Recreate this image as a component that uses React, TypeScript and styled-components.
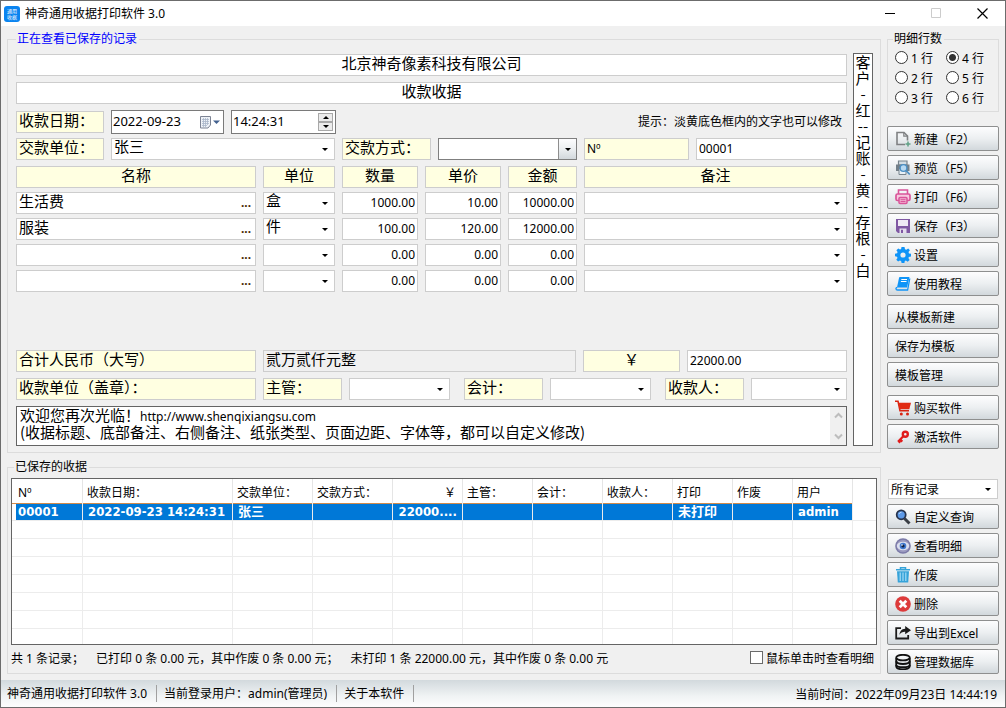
import React, { useState } from "react";
import styled, { createGlobalStyle, css } from "styled-components";

const line = "#cdcdcd";
const dark = "#646464";
const cream = "#ffffe1";
const face = "linear-gradient(#fdfdfe, #eceff1 50%, #d2d8dc)";

const Global = createGlobalStyle`
  *, *::before, *::after { box-sizing: border-box; }
  body { margin: 0; background: #f0f0f0; }
  body, input, select, button, textarea {
    font-family: "Noto Sans", "Noto Sans CJK SC", sans-serif;
    font-size: 12px;
    color: #000;
  }
  button, input, select, textarea { margin: 0; border-radius: 0; outline: none; }
`;

const Window = styled.div`
  min-height: 100vh;
  display: flex;
  flex-direction: column;
  background: #f0f0f0;
  border: 1px solid #6c6c6c;
`;

/* title bar */
const TitleBar = styled.header`
  height: 25px;
  display: flex;
  align-items: center;
  background: #fff;
  padding-left: 3px;
`;
const Title = styled.h1`
  flex: 1;
  margin: 0 0 0 5px;
  font-size: 12px;
  font-weight: 400;
  line-height: 16px;
`;
const WindowButton = styled.button`
  width: 46px;
  height: 25px;
  padding: 0;
  border: 0;
  background: none;
  display: grid;
  place-items: center;
`;

/* page frame */
const Main = styled.main`
  flex: 1;
  display: grid;
  grid-template-columns: minmax(0, 1fr) 112px;
  grid-template-rows: auto 1fr;
  gap: 7px 6px;
  padding: 6px 6px 6px;
`;
const Group = styled.fieldset`
  min-width: 0;
  margin: 0;
  padding: 0;
  border: 1px solid #dcdcdc;
`;
const Legend = styled.legend<{ $left: number; $color?: string }>`
  height: 14px;
  line-height: 14px;
  margin-left: ${(p) => p.$left}px;
  padding: 0 2px 0 1px;
  color: ${(p) => p.$color || "#000"};
`;
const FormGroup = styled(Group)`
  padding: 7px 7px 6px 8px;
  display: grid;
  grid-template-columns: minmax(0, 1fr) 20px;
  gap: 6px;
`;
const Form = styled.form`
  display: flex;
  flex-direction: column;
  gap: 6px;
  padding-top: 1px;
`;
const Row = styled.div<{ $columns: string; $gap?: number }>`
  display: grid;
  grid-template-columns: ${(p) => p.$columns};
  column-gap: ${(p) => p.$gap ?? 7}px;
  align-items: center;
  height: 22px;
`;

/* fields */
const fieldText = css`
  font-size: 15px;
  line-height: 15px;
  padding: 0 2px 5px;
`;
const Field = styled.input<{ $align?: string; $bg?: string }>`
  width: 100%;
  min-width: 0;
  height: 22px;
  border: 1px solid ${line};
  background: ${(p) => p.$bg || "#fff"};
  text-align: ${(p) => p.$align || "left"};
  ${fieldText}
`;
const NumberField = styled(Field)`
  font-size: 12px;
  padding: 0 2px 1px;
`;
const Box = styled.div<{ $border?: string; $tall?: boolean }>`
  display: flex;
  align-items: center;
  min-width: 0;
  height: ${(p) => (p.$tall ? 24 : 22)}px;
  border: 1px solid ${(p) => p.$border || line};
  background: #fff;
`;
const BareInput = styled.input<{ $small?: boolean }>`
  flex: 1;
  min-width: 0;
  height: 20px;
  border: 0;
  background: none;
  ${fieldText}
  ${(p) => p.$small && "font-size: 13px; padding: 0 1px 2px;"}
`;
const DotsButton = styled.button`
  width: 20px;
  height: 20px;
  border: 0;
  padding: 0 0 0 2px;
  background: none;
  font-size: 12px;
  font-weight: 700;
  line-height: 20px;
  color: #4a2a00;
`;
const DropButton = styled.button`
  width: 26px;
  height: 20px;
  padding: 0;
  border: 0;
  background: none;
  display: flex;
  align-items: center;
  justify-content: center;
`;
const Spinner = styled.div`
  display: flex;
  flex-direction: column;
  width: 15px;
  margin-right: 2px;
`;
const SpinButton = styled.button`
  height: 9px;
  padding: 0;
  border: 1px solid #a8a8a8;
  background: #ececec;
  display: grid;
  place-items: center;
`;
const ComboFrame = styled.div<{ $framed?: boolean; $small?: boolean }>`
  display: grid;
  grid-template-columns: minmax(0, 1fr) 18px;
  align-items: center;
  height: ${(p) => (p.$small ? 20 : 22)}px;
  min-width: 0;
  border: 1px solid ${(p) => (p.$framed ? "#7f7f7f" : line)};
  background: #fff;
`;
const ComboSelect = styled.select<{ $small?: boolean }>`
  grid-area: 1 / 1 / 2 / 3;
  appearance: none;
  width: 100%;
  height: 100%;
  border: 0;
  background: none;
  ${fieldText}
  ${(p) => p.$small && "font-size: 12px; padding: 0 2px;"}
`;
const ComboArrow = styled.span<{ $framed?: boolean }>`
  grid-area: 1 / 2 / 2 / 3;
  align-self: stretch;
  display: grid;
  place-items: center;
  pointer-events: none;
  ${(p) => p.$framed && `border-left: 1px solid #8e8e8e; background: ${face};`}
`;
const Hint = styled.p`
  margin: 0 5px 3px 0;
  text-align: right;
`;

/* detail lines keep the room of six rows */
const Details = styled.div`
  display: flex;
  flex-direction: column;
  gap: 4px;
  min-height: 178px;
`;
const NoteFrame = styled.div`
  display: grid;
  grid-template-columns: minmax(0, 1fr) 16px;
  height: 40px;
  border: 1px solid ${dark};
  background: #fff;
`;
const Note = styled.div`
  padding: 0 3px;
  font-family: "Noto Sans CJK SC", sans-serif;
  font-size: 15px;
  line-height: 15px;
  outline: none;
`;
const NoteLine = styled.div`
  height: 17px;
`;
const NoteLink = styled.a`
  font-family: "Noto Sans", sans-serif;
  font-size: 12px;
  line-height: 12px;
  color: #000;
  text-decoration: none;
`;
const ScrollRail = styled.div`
  display: flex;
  flex-direction: column;
  justify-content: space-between;
  background: #f0f0f0;
`;
const ScrollButton = styled.button`
  height: 17px;
  padding: 0;
  border: 0;
  background: none;
  display: grid;
  place-items: center;
`;
const SideNote = styled.textarea`
  display: block;
  width: 20px;
  height: 100%;
  padding: 0;
  border: 1px solid ${dark};
  background: #fff;
  font-family: "Noto Sans CJK SC", sans-serif;
  font-size: 15px;
  line-height: 16px;
  text-align: center;
  resize: none;
  overflow: hidden;
`;

/* side column */
const Side = styled.aside`
  display: flex;
  flex-direction: column;
`;
const RadioGrid = styled.div`
  display: grid;
  grid-template: repeat(3, 20px) / 51px 1fr;
  grid-auto-flow: column;
  padding: 2px 0 3px 7px;
`;
const RadioLabel = styled.label`
  display: flex;
  align-items: center;
  gap: 3px;
`;
const Radio = styled.input`
  appearance: none;
  width: 13px;
  height: 13px;
  margin: 0 0 1px;
  border: 1px solid #333;
  border-radius: 50%;
  background: #fff;
  &:checked {
    background: radial-gradient(circle, #333 3px, #fff 4px);
  }
`;
const ButtonStack = styled.div<{ $top: number }>`
  display: flex;
  flex-direction: column;
  gap: 4px;
  margin-top: ${(p) => p.$top}px;
`;
const ActionButton = styled.button`
  height: 25px;
  display: flex;
  align-items: center;
  gap: 3px;
  padding: 0 0 0 7px;
  border: 1px solid #8e8f8f;
  border-radius: 2px;
  background: ${face};
  text-align: left;
  white-space: nowrap;
`;
const QuerySide = styled(Side)`
  padding-top: 19px;
`;
const QueryCombo = styled.div`
  margin: 0 1px 0 1px;
`;

/* saved receipts */
const ListGroup = styled(Group)`
  display: flex;
  flex-direction: column;
  padding: 4px 3px 0;
`;
const ListFrame = styled.div`
  flex: 1 1 0;
  min-height: 166px;
  overflow: hidden;
  border: 1px solid ${dark};
  background: #fff;
`;
const Table = styled.table`
  width: 100%;
  table-layout: fixed;
  border-collapse: separate;
  border-spacing: 0;
`;
const Th = styled.th<{ $right?: boolean }>`
  height: 24px;
  padding: 3px 6px 0 4px;
  border-right: 1px solid #e5e5e5;
  font-weight: 400;
  line-height: 16px;
  text-align: ${(p) => (p.$right ? "right" : "left")};
  white-space: nowrap;
  &:first-child { padding-left: 6px; }
  &:last-child { border-right: 0; }
`;
const Tr = styled.tr<{ $selected?: boolean }>`
  td {
    height: 18px;
    padding: 0 5px;
    border-right: 1px solid #ececec;
    border-bottom: 1px solid #ececec;
    line-height: 16px;
    white-space: nowrap;
  }
  td:first-child { padding-left: 6px; }
  td:last-child { border-right: 0; }
  ${(p) =>
    p.$selected &&
    css`
      td:not(:last-child) {
        background: #0078d7;
        background-clip: padding-box;
        color: #fff;
        font-family: "DejaVu Sans Condensed", "Noto Sans", "Noto Sans CJK SC", sans-serif;
        font-size: 13px;
        font-weight: 700;
        box-shadow: inset 0 1px #d08a4a;
      }
      td:first-child {
        background: linear-gradient(to right, #fff 4px, #0078d7 4px);
        background-clip: padding-box;
      }
    `}
`;
const ListFooter = styled.footer`
  display: flex;
  justify-content: space-between;
  align-items: center;
  height: 28px;
  padding: 0 3px 2px 0;
`;
const Totals = styled.p`
  display: flex;
  gap: 12px;
  margin: 0;
`;
const CheckLabel = styled.label`
  display: flex;
  align-items: center;
  gap: 3px;
`;
const Check = styled.input`
  appearance: none;
  width: 13px;
  height: 13px;
  margin: 0 0 2px;
  border: 1px solid #6a6a6a;
  background: #fff;
  &:checked { box-shadow: inset 0 0 0 3px #fff, inset 0 0 0 8px #333; }
`;

/* status bar */
const StatusBar = styled.footer`
  display: flex;
  align-items: center;
  height: 27px;
  background: linear-gradient(#d2d9dd, #f0f3f4 60%, #fdfdfd);
`;
const StatusItem = styled.span`
  height: 17px;
  line-height: 17px;
  padding: 0 9px 0 7px;
  border-right: 1px solid #a0a0a0;
  &:first-child { padding-left: 6px; }
`;
const StatusButton = styled(StatusItem).attrs({ as: "button" })`
  border-width: 0 1px 0 0;
  border-style: solid;
  background: none;
`;
const Clock = styled.time`
  margin-left: auto;
  padding-right: 8px;
`;

const Svg = styled.svg`
  display: block;
  flex: none;
`;
const Icon = ({ children }: { children: React.ReactNode }) => (
  <Svg width="16" height="16" viewBox="0 0 16 16" fill="none" aria-hidden="true">
    {children}
  </Svg>
);
const Arrow = ({ up, color = "#000" }: { up?: boolean; color?: string }) => (
  <Svg width="6" height="3" viewBox="0 0 6 3" aria-hidden="true">
    <path d={up ? "M3 0L6 3H0Z" : "M0 0H6L3 3Z"} fill={color} />
  </Svg>
);
const Chevron = ({ up }: { up?: boolean }) => (
  <Svg width="9" height="7" viewBox="0 0 9 7" fill="none" aria-hidden="true">
    <path d={up ? "M1 5.5L4.500 2L8 5.5" : "M1 1.500L4.500 5L8 1.500"} stroke="#bdbdbd" strokeWidth="2" />
  </Svg>
);

const icons = {
  create: (
    <Icon>
      <path d="M10 13.500H2V1.500H9L12.500 5V9.500" stroke="#7f8183" strokeWidth="1.600" />
      <path d="M8.800 1.500V5.200H12.500" stroke="#7f8183" strokeWidth="1.200" />
      <path d="M13 10.500V15.500M10.500 13H15.500" stroke="#5fa085" strokeWidth="1.500" />
    </Icon>
  ),
  preview: (
    <Icon>
      <path d="M3.500 1H12V5H3.500Z" fill="#d3dde4" stroke="#77838c" strokeWidth="1.200" />
      <path d="M1 4.500H14.500V11H1Z" fill="#737f88" />
      <path d="M4 8.500H11V14.500H4Z" fill="#e8f1f7" stroke="#77838c" />
      <circle cx="8.500" cy="8" r="3.400" fill="#b7d9f2" stroke="#4b8fc4" strokeWidth="1.400" />
      <path d="M11 10.500L14.800 14.500" stroke="#4b8fc4" strokeWidth="1.800" />
    </Icon>
  ),
  print: (
    <Icon>
      <path d="M3.500 5V1H12.500V5" stroke="#d9559a" strokeWidth="1.600" />
      <rect x="1" y="5" width="14" height="6.500" rx="1.500" fill="#f7c9df" stroke="#d9559a" strokeWidth="1.700" />
      <rect x="4" y="8.500" width="8" height="6" rx="1" fill="#f3b4d2" stroke="#d9559a" strokeWidth="1.500" />
      <path d="M5.500 10.700H10.500M5.500 12.500H10.500" stroke="#d9559a" />
    </Icon>
  ),
  save: (
    <Icon>
      <path d="M1 1H15V15H3L1 13Z" fill="#7f58a3" />
      <path d="M3 2H13V8H3Z" fill="#efe9f5" />
      <path d="M4.500 10.500H11.500V15H4.500Z" fill="#e4dced" />
      <path d="M6 11.800H8V15H6Z" fill="#7f58a3" />
    </Icon>
  ),
  gear: (
    <Icon>
      <path
        fillRule="evenodd"
        fill="#0f94f7"
        d="M6.500 0H9.500L10 2.200L11.300 2.700L13.200 1.500L14.900 3.300L13.500 5.100L14 6.400L16 6.800V9.400L13.900 9.900L13.400 11L14.600 12.900L12.700 14.700L10.900 13.500L9.800 14L9.400 16H6.600L6.100 13.900L4.900 13.400L3.100 14.600L1.300 12.700L2.500 10.900L2 9.700L0 9.300V6.700L2.100 6.200L2.600 5L1.400 3.200L3.300 1.400L5 2.600L6.100 2.100ZM8 5.400A2.600 2.600 0 1 0 8 10.600A2.600 2.600 0 1 0 8 5.400Z"
      />
    </Icon>
  ),
  book: (
    <Icon>
      <path d="M4.500 1H14.500L12 11.500H2L4 2Z" fill="#0f94f7" />
      <path d="M14.800 2.500L12.600 14H2.500C.5 14 .5 11.500 2.200 11.500" stroke="#0f94f7" strokeWidth="1.300" />
      <path d="M6.300 3.500H12M5.900 5.500H11.500" stroke="#fff" />
    </Icon>
  ),
  cart: (
    <Icon>
      <path d="M0 1.200H3L5 10.800H14" stroke="#d92412" strokeWidth="1.600" />
      <path d="M3.300 2.800H16L14.300 9.300H4.600Z" fill="#e02b14" />
      <circle cx="6.300" cy="14" r="1.500" fill="#d92412" />
      <circle cx="12.500" cy="14" r="1.500" fill="#d92412" />
    </Icon>
  ),
  key: (
    <Icon>
      <circle cx="10.300" cy="5.200" r="2.500" stroke="#e01c1c" strokeWidth="2.400" />
      <path d="M8.300 7.300L3 12.800M5.200 10.500L7.300 12.600M3.600 12L5.200 13.700" stroke="#e01c1c" strokeWidth="2.200" />
    </Icon>
  ),
  search: (
    <Icon>
      <path d="M9.500 9.500L14.500 14.500" stroke="#3a3f46" strokeWidth="3" />
      <circle cx="6.200" cy="5.800" r="4.500" fill="#5d9ae8" stroke="#26334d" strokeWidth="1.800" />
      <path d="M4 5A2.500 2.500 0 0 1 6.500 3.300" stroke="#b9d7fa" />
    </Icon>
  ),
  eye: (
    <Icon>
      <circle cx="8" cy="8" r="7.800" fill="#7b7aa8" />
      <circle cx="8" cy="8" r="6.300" fill="#9a99bf" />
      <ellipse cx="8" cy="8" rx="6.200" ry="4.200" fill="#dcdfee" />
      <circle cx="8" cy="8" r="3.300" fill="#3f78cf" />
      <circle cx="8" cy="8" r="1.600" fill="#14213f" />
      <circle cx="7" cy="7" r=".8" fill="#fff" />
    </Icon>
  ),
  trash: (
    <Icon>
      <path d="M5.500 2V.700H10.500V2M1 2.700H15" stroke="#36a3d9" strokeWidth="1.500" />
      <path d="M2 4.300H14L13.200 15.500H2.800Z" fill="#36a3d9" />
      <path d="M5.200 5.500V14M8 5.500V14M10.800 5.500V14" stroke="#a5dbf5" strokeWidth="1.200" />
    </Icon>
  ),
  remove: (
    <Icon>
      <circle cx="8" cy="8" r="7.800" fill="#dd3b3b" />
      <path d="M4.700 4.700L11.300 11.300M11.300 4.700L4.700 11.300" stroke="#fff" strokeWidth="2.800" />
    </Icon>
  ),
  share: (
    <Icon>
      <path d="M6 3.200H1.200V13.500H13.200V10" stroke="#1b1b1b" strokeWidth="1.800" />
      <path d="M10.200 1L16 5.200L10.200 9.300V6.800C7.500 6.700 6 7.500 4.500 9.800C4.700 6.200 6.700 3.900 10.200 3.700Z" fill="#1b1b1b" />
    </Icon>
  ),
  database: (
    <Icon>
      <ellipse cx="8" cy="3.600" rx="6.800" ry="2.800" stroke="#111" strokeWidth="1.800" />
      <path d="M1.200 4V12.300C1.200 16.300 14.800 16.300 14.800 12.300V4" stroke="#111" strokeWidth="1.800" />
      <path d="M1.200 7.200C2 10.800 14 10.800 14.800 7.200M1.200 11C2 14 14 14 14.800 11" stroke="#111" strokeWidth="2" />
    </Icon>
  ),
};

const Combo = ({ label, value = "", framed, small }: { label: string; value?: string; framed?: boolean; small?: boolean }) => (
  <ComboFrame $framed={framed} $small={small}>
    <ComboSelect aria-label={label} $small={small} defaultValue={value}>
      <option>{value}</option>
    </ComboSelect>
    <ComboArrow $framed={framed}>
      <Arrow />
    </ComboArrow>
  </ComboFrame>
);
const Caption = ({ text, align }: { text: string; align?: string }) => (
  <Field $bg={cream} $align={align} aria-label={text} defaultValue={text} />
);
const Action = ({ icon, children }: { icon?: React.ReactNode; children: React.ReactNode }) => (
  <ActionButton type="button">
    {icon}
    <span>{children}</span>
  </ActionButton>
);

const detailColumns = "240px 72px 76px 76px 69px minmax(0, 1fr)";
const headings = ["名称", "单位", "数量", "单价", "金额", "备注"];
const items = [
  ["生活费", "盒", "1000.00", "10.00", "10000.00"],
  ["服装", "件", "100.00", "120.00", "12000.00"],
];
const blank = ["", "", "0.00", "0.00", "0.00"];
const columns: [string, number?][] = [
  ["Nº", 71],
  ["收款日期：", 150],
  ["交款单位：", 80],
  ["交款方式：", 80],
  ["￥", 70],
  ["主管：", 70],
  ["会计：", 70],
  ["收款人：", 70],
  ["打印", 60],
  ["作废", 60],
  ["用户", 60],
  [""],
];
const receipt = ["00001", "2022-09-23 14:24:31", "张三", "", "22000....", "", "", "", "未打印", "", "admin", ""];

export default function App() {
  const [rows, setRows] = useState(4);
  return (
    <Window>
      <Global />
      <TitleBar>
        <Icon>
          <rect width="16" height="16" rx="3" fill="#0a84f0" />
          <text x="8" y="7" fontSize="5" textAnchor="middle" fill="#fff">通用</text>
          <text x="8" y="13" fontSize="5" textAnchor="middle" fill="#fff">收据</text>
        </Icon>
        <Title>神奇通用收据打印软件 3.0</Title>
        <WindowButton aria-label="最小化">
          <Svg width="11" height="11" viewBox="0 0 11 11"><path d="M0 5.500H10" stroke="#000" /></Svg>
        </WindowButton>
        <WindowButton aria-label="最大化" disabled>
          <Svg width="11" height="11" viewBox="0 0 11 11" fill="none"><path d="M.5 .5H9.500V9.500H.5Z" stroke="#ccc" /></Svg>
        </WindowButton>
        <WindowButton aria-label="关闭">
          <Svg width="11" height="11" viewBox="0 0 11 11"><path d="M.5 .5L10.500 10.500M10.500 .5L.5 10.500" stroke="#000" strokeWidth="1.200" /></Svg>
        </WindowButton>
      </TitleBar>

      <Main>
        <FormGroup>
          <Legend $left={0} $color="#0000ff">正在查看已保存的记录</Legend>
          <Form>
            <Field $align="center" aria-label="公司名称" defaultValue="北京神奇像素科技有限公司" />
            <Field $align="center" aria-label="收据标题" defaultValue="收款收据" />
            <Row $columns="88px 113px 105px minmax(0, 1fr)">
              <Caption text="收款日期：" />
              <Box $border="#7a7a7a" $tall>
                <BareInput $small aria-label="日期" defaultValue="2022-09-23" />
                <DropButton type="button" aria-label="选择日期">
                  <Svg width="20" height="13" viewBox="0 0 20 13" fill="none">
                    <path d="M.5 .5H10.500V9L8 12H.5Z" fill="#eef2f7" stroke="#7d8494" />
                    <path d="M2 3.500H9M2 5.500H9M2 7.500H9M2 9.500H7M3.500 2V11M5.500 2V11M7.500 2V9" stroke="#a9b6c9" strokeWidth=".8" />
                    <path d="M13 4.500H20L16.500 8Z" fill="#42618f" />
                  </Svg>
                </DropButton>
              </Box>
              <Box $border="#7a7a7a" $tall>
                <BareInput $small aria-label="时间" defaultValue="14:24:31" />
                <Spinner>
                  <SpinButton type="button" aria-label="增加"><Arrow up /></SpinButton>
                  <SpinButton type="button" aria-label="减少"><Arrow /></SpinButton>
                </Spinner>
              </Box>
              <Hint>提示：淡黄底色框内的文字也可以修改</Hint>
            </Row>
            <Row $columns="88px 224px 89px 139px 105px minmax(0, 1fr)">
              <Caption text="交款单位：" />
              <Combo label="交款单位" value="张三" />
              <Caption text="交款方式：" />
              <Combo label="交款方式" framed />
              <NumberField $bg={cream} aria-label="编号名称" defaultValue="Nº" />
              <NumberField aria-label="编号" defaultValue="00001" />
            </Row>
            <Details>
              <Row $columns={detailColumns}>
                {headings.map((h) => (
                  <Caption key={h} text={h} align="center" />
                ))}
              </Row>
              {Array.from({ length: rows }, (_, i) => {
                const [name, unit, ...numbers] = items[i] || blank;
                return (
                  <Row $columns={detailColumns} key={i}>
                    <Box>
                      <BareInput aria-label={`名称 ${i + 1}`} defaultValue={name} />
                      <DotsButton type="button" aria-label="选择名称">...</DotsButton>
                    </Box>
                    <Combo label={`单位 ${i + 1}`} value={unit} />
                    {numbers.map((n, k) => (
                      <NumberField key={k} $align="right" aria-label={`${headings[k + 2]} ${i + 1}`} defaultValue={n} />
                    ))}
                    <Combo label={`备注 ${i + 1}`} />
                  </Row>
                );
              })}
            </Details>
            <Row $columns="240px 313px 97px minmax(0, 1fr)">
              <Caption text="合计人民币（大写）" />
              <Field $bg="#f0f0f0" readOnly aria-label="大写金额" value="贰万贰仟元整" />
              <Caption text="￥" align="center" />
              <NumberField aria-label="合计金额" defaultValue="22000.00" />
            </Row>
            <Row $columns="240px minmax(0, 1fr)">
              <Caption text="收款单位（盖章）：" />
              <Row $columns="187px 187px minmax(0, 1fr)" $gap={14}>
                {["主管：", "会计：", "收款人："].map((t) => (
                  <Row $columns="79px minmax(0, 1fr)" key={t}>
                    <Caption text={t} />
                    <Combo label={t} />
                  </Row>
                ))}
              </Row>
            </Row>
            <NoteFrame>
              <Note role="textbox" aria-label="底部备注" contentEditable suppressContentEditableWarning spellCheck={false}>
                <NoteLine>
                  欢迎您再次光临！<NoteLink href="http://www.shenqixiangsu.com">http://www.shenqixiangsu.com</NoteLink>
                </NoteLine>
                <NoteLine>(收据标题、底部备注、右侧备注、纸张类型、页面边距、字体等，都可以自定义修改)</NoteLine>
              </Note>
              <ScrollRail>
                <ScrollButton type="button" aria-label="向上"><Chevron up /></ScrollButton>
                <ScrollButton type="button" aria-label="向下"><Chevron /></ScrollButton>
              </ScrollRail>
            </NoteFrame>
          </Form>
          <SideNote
            aria-label="右侧备注"
            defaultValue={["客", "户", "-", "红", "--", "记", "账", "-", "黄", "--", "存", "根", "-", "白"].join("\n")}
          />
        </FormGroup>

        <Side>
          <Group>
            <Legend $left={5}>明细行数</Legend>
            <RadioGrid>
              {[1, 2, 3, 4, 5, 6].map((n) => (
                <RadioLabel key={n}>
                  <Radio type="radio" name="rows" checked={rows === n} onChange={() => setRows(n)} />
                  {n} 行
                </RadioLabel>
              ))}
            </RadioGrid>
          </Group>
          <ButtonStack $top={14}>
            <Action icon={icons.create}>新建（F2）</Action>
            <Action icon={icons.preview}>预览（F5）</Action>
            <Action icon={icons.print}>打印（F6）</Action>
            <Action icon={icons.save}>保存（F3）</Action>
            <Action icon={icons.gear}>设置</Action>
            <Action icon={icons.book}>使用教程</Action>
          </ButtonStack>
          <ButtonStack $top={8}>
            <Action>从模板新建</Action>
            <Action>保存为模板</Action>
            <Action>模板管理</Action>
          </ButtonStack>
          <ButtonStack $top={8}>
            <Action icon={icons.cart}>购买软件</Action>
            <Action icon={icons.key}>激活软件</Action>
          </ButtonStack>
        </Side>

        <ListGroup>
          <Legend $left={3}>已保存的收据</Legend>
          <ListFrame>
            <Table>
              <colgroup>
                {columns.map(([t, w]) => (
                  <col key={t} width={w} />
                ))}
              </colgroup>
              <thead>
                <tr>
                  {columns.map(([t]) => (
                    <Th key={t} $right={t === "￥"}>{t}</Th>
                  ))}
                </tr>
              </thead>
              <tbody>
                <Tr $selected>
                  {receipt.map((v, i) => (
                    <td key={i} align={i === 4 ? "right" : "left"}>{v}</td>
                  ))}
                </Tr>
                {Array.from({ length: 24 }, (_, r) => (
                  <Tr key={r}>
                    {columns.map(([t]) => (
                      <td key={t} />
                    ))}
                  </Tr>
                ))}
              </tbody>
            </Table>
          </ListFrame>
          <ListFooter>
            <Totals>
              <span>共 1 条记录；</span>
              <span>已打印 0 条 0.00 元，其中作废 0 条 0.00 元；</span>
              <span>未打印 1 条 22000.00 元，其中作废 0 条 0.00 元</span>
            </Totals>
            <CheckLabel>
              <Check type="checkbox" />
              鼠标单击时查看明细
            </CheckLabel>
          </ListFooter>
        </ListGroup>

        <QuerySide>
          <QueryCombo>
            <Combo label="记录范围" value="所有记录" small />
          </QueryCombo>
          <ButtonStack $top={5}>
            <Action icon={icons.search}>自定义查询</Action>
            <Action icon={icons.eye}>查看明细</Action>
            <Action icon={icons.trash}>作废</Action>
            <Action icon={icons.remove}>删除</Action>
            <Action icon={icons.share}>导出到Excel</Action>
            <Action icon={icons.database}>管理数据库</Action>
          </ButtonStack>
        </QuerySide>
      </Main>

      <StatusBar>
        <StatusItem>神奇通用收据打印软件 3.0</StatusItem>
        <StatusItem>当前登录用户：admin(管理员)</StatusItem>
        <StatusButton>关于本软件</StatusButton>
        <Clock>当前时间：2022年09月23日 14:44:19</Clock>
      </StatusBar>
    </Window>
  );
}
